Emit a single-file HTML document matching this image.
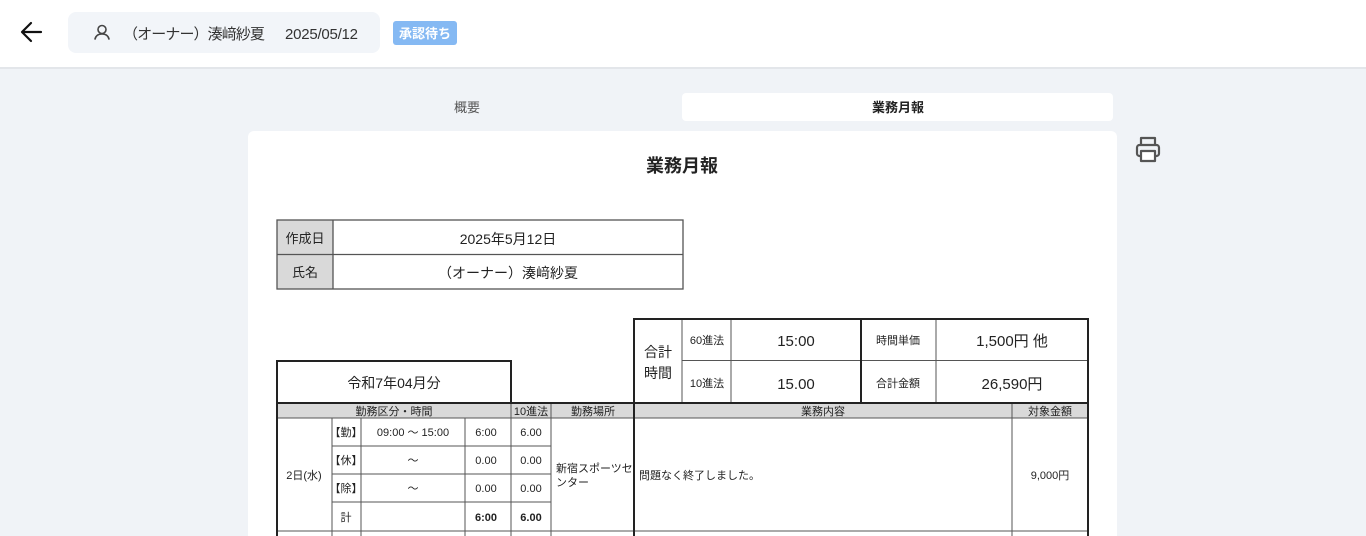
<!DOCTYPE html>
<html><head><meta charset="utf-8"><style>
html,body{margin:0;padding:0;width:1366px;height:536px;overflow:hidden;background:#f0f3f7}
svg{display:block}
text{font-family:"Liberation Sans","Noto Sans CJK JP",sans-serif;fill:#222}
</style></head><body>
<svg width="1366" height="536" viewBox="0 0 1366 536" xmlns="http://www.w3.org/2000/svg">
<rect x="0" y="0" width="1366" height="67" fill="#fff"/>
<rect x="0" y="67" width="1366" height="2" fill="#e3e6ea"/>
<path d="M41 32H23M31 23l-9 9 9 9" stroke="#111" stroke-width="2.2" fill="none" stroke-linecap="round" stroke-linejoin="round"/>
<rect x="68" y="12" width="312" height="41" rx="8" fill="#f2f5f9"/>
<circle cx="102" cy="29.5" r="4" stroke="#444" stroke-width="1.6" fill="none"/>
<path d="M95 39c1-4 4-5 7-5s6 1 7 5" stroke="#444" stroke-width="1.6" fill="none" stroke-linecap="round"/>
<text x="123" y="39" font-size="15" textLength="142" style="fill:#333">（オーナー）湊﨑紗夏</text>
<text x="285" y="39" font-size="15" textLength="73" style="fill:#333">2025/05/12</text>
<rect x="393" y="21" width="64" height="24" rx="3" fill="#85b9f3"/>
<text x="425" y="38" font-size="13" font-weight="bold" text-anchor="middle" style="fill:#fff">承認待ち</text>
<text x="467" y="112" font-size="13" text-anchor="middle" style="fill:#555">概要</text>
<rect x="682" y="93" width="431" height="28" rx="4" fill="#fff"/>
<text x="898" y="112" font-size="13" font-weight="bold" text-anchor="middle">業務月報</text>
<rect x="248" y="131" width="869" height="420" rx="6" fill="#fff"/>
<g stroke="#555" stroke-width="2.2" fill="none" stroke-linejoin="round">
<path d="M1141 145v-7h14v7"/>
<rect x="1137" y="145" width="22" height="11" rx="2.5"/>
<rect x="1141" y="151" width="14" height="10" fill="#fff"/>
</g>
<text x="682" y="172" font-size="18" font-weight="bold" text-anchor="middle">業務月報</text>
<rect x="277" y="220" width="56" height="69" fill="#d9d9d9"/>
<g stroke="#555" stroke-width="1.3" fill="none">
<rect x="277" y="220" width="406" height="69"/>
<line x1="277" y1="254.5" x2="683" y2="254.5"/>
<line x1="333" y1="220" x2="333" y2="289"/>
</g>
<text x="305" y="243" font-size="13" text-anchor="middle">作成日</text>
<text x="305" y="277" font-size="13" text-anchor="middle">氏名</text>
<text x="508" y="244" font-size="14" text-anchor="middle">2025年5月12日</text>
<text x="508" y="278" font-size="14" text-anchor="middle">（オーナー）湊﨑紗夏</text>
<rect x="277" y="403" width="811" height="15" fill="#d9d9d9"/>
<g stroke="#555" stroke-width="1" fill="none">
<line x1="511" y1="403" x2="511" y2="536"/>
<line x1="551" y1="403" x2="551" y2="536"/>
<line x1="1012" y1="403" x2="1012" y2="536"/>
<line x1="332" y1="418" x2="332" y2="536"/>
<line x1="361" y1="418" x2="361" y2="536"/>
<line x1="465" y1="418" x2="465" y2="536"/>
<line x1="277" y1="418" x2="1088" y2="418"/>
<line x1="332" y1="446" x2="551" y2="446"/>
<line x1="332" y1="474" x2="551" y2="474"/>
<line x1="332" y1="502" x2="551" y2="502"/>
<line x1="277" y1="531" x2="1088" y2="531"/>
<line x1="682" y1="319" x2="682" y2="403"/>
<line x1="731" y1="319" x2="731" y2="403"/>
<line x1="936" y1="319" x2="936" y2="403"/>
<line x1="682" y1="360.5" x2="1088" y2="360.5"/>
</g>
<g stroke="#222" stroke-width="2" fill="none">
<rect x="277" y="361" width="234" height="42"/>
<rect x="634" y="319" width="454" height="84"/>
<line x1="861" y1="319" x2="861" y2="403"/>
<line x1="277" y1="403" x2="277" y2="536"/>
<line x1="1088" y1="403" x2="1088" y2="536"/>
<line x1="634" y1="403" x2="634" y2="536"/>
<line x1="511" y1="403" x2="1088" y2="403"/>
</g>
<text x="394" y="388" font-size="14" text-anchor="middle">令和7年04月分</text>
<text x="658" y="357" font-size="14" text-anchor="middle">合計</text>
<text x="658" y="378" font-size="14" text-anchor="middle">時間</text>
<text x="707" y="344" font-size="11" text-anchor="middle">60進法</text>
<text x="707" y="387" font-size="11" text-anchor="middle">10進法</text>
<text x="796" y="346" font-size="15" text-anchor="middle">15:00</text>
<text x="796" y="389" font-size="15" text-anchor="middle">15.00</text>
<text x="898" y="344" font-size="11" text-anchor="middle">時間単価</text>
<text x="898" y="387" font-size="11" text-anchor="middle">合計金額</text>
<text x="1012" y="346" font-size="15" text-anchor="middle">1,500円 他</text>
<text x="1012" y="389" font-size="15" text-anchor="middle">26,590円</text>
<g font-size="11" text-anchor="middle">
<text x="394" y="415">勤務区分・時間</text>
<text x="531" y="415">10進法</text>
<text x="593" y="415">勤務場所</text>
<text x="823" y="415">業務内容</text>
<text x="1050" y="415">対象金額</text>
<text x="304" y="479">2日(水)</text>
<text x="346" y="436">【勤】</text>
<text x="346" y="464">【休】</text>
<text x="346" y="492">【除】</text>
<text x="346" y="521">計</text>
<text x="413" y="436">09:00 ～ 15:00</text>
<text x="413" y="464">～</text>
<text x="413" y="492">～</text>
<text x="486" y="436">6:00</text>
<text x="486" y="464">0.00</text>
<text x="486" y="492">0.00</text>
<text x="486" y="521" font-weight="bold">6:00</text>
<text x="531" y="436">6.00</text>
<text x="531" y="464">0.00</text>
<text x="531" y="492">0.00</text>
<text x="531" y="521" font-weight="bold">6.00</text>
<text x="1050" y="479">9,000円</text>
</g>
<text x="556" y="472" font-size="11">新宿スポーツセ</text>
<text x="556" y="486" font-size="11">ンター</text>
<text x="639" y="479" font-size="11">問題なく終了しました。</text>
</svg>
</body></html>
